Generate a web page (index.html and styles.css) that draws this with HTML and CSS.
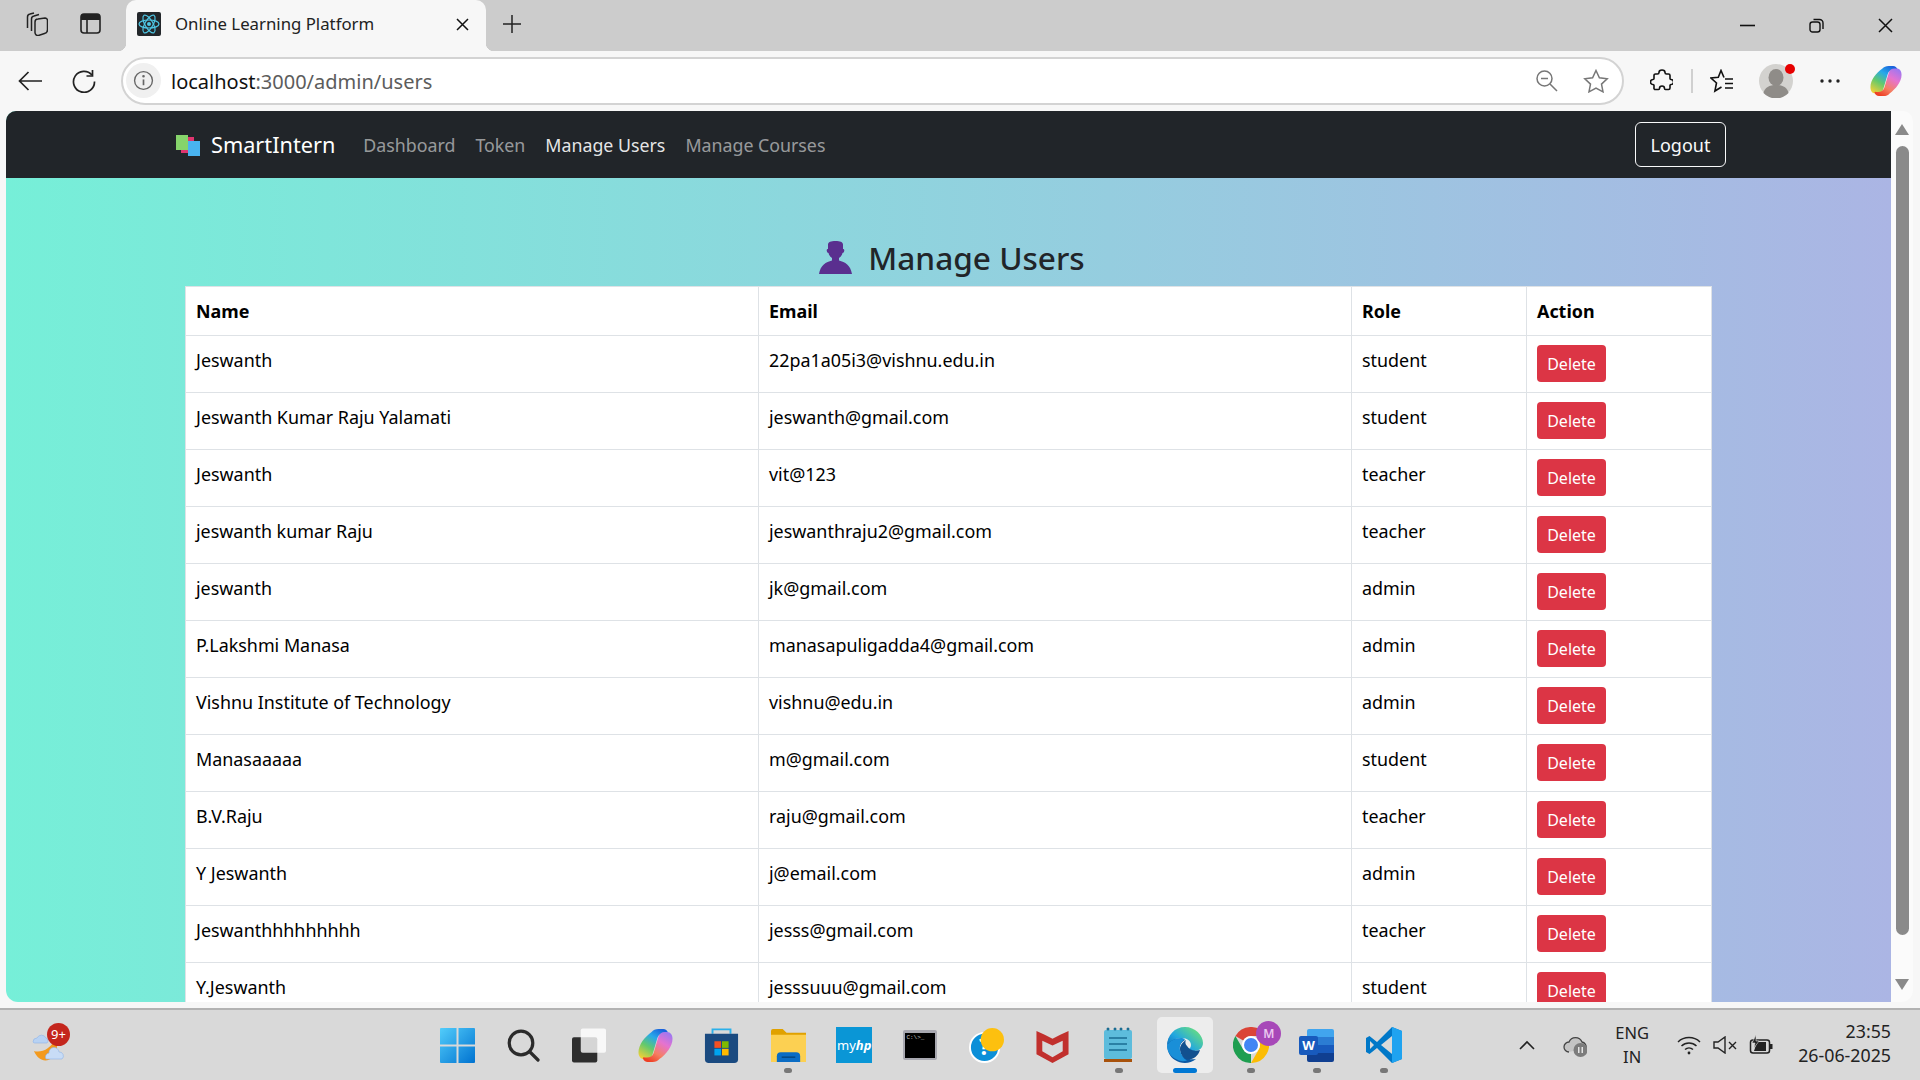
FILE: index.html
```html
<!DOCTYPE html>
<html lang="en">
  <head>
    <meta charset="utf-8">
    <title>Online Learning Platform</title>
    <link rel="stylesheet" href="styles.css">
  </head>
<body>
  <svg class="defs" width="0" height="0">
    <defs>
      <linearGradient id="copA" x1="0.75" y1="0" x2="0.15" y2="1">
        <stop offset="0" stop-color="#1a62dc"/><stop offset="0.3" stop-color="#27a8ea"/><stop offset="0.62" stop-color="#63c96c"/><stop offset="1" stop-color="#f4d136"/>
      </linearGradient>
      <linearGradient id="copB" x1="0.75" y1="0" x2="0.15" y2="1">
        <stop offset="0" stop-color="#ee3f24"/><stop offset="0.3" stop-color="#f57f63"/><stop offset="0.65" stop-color="#e573d0"/><stop offset="1" stop-color="#9a78f2"/>
      </linearGradient>
      <linearGradient id="edgeTop" x1="0" y1="1" x2="1" y2="0.2">
        <stop offset="0" stop-color="#0b62b5"/><stop offset="0.45" stop-color="#22a7e0"/><stop offset="1" stop-color="#6ce27a"/>
      </linearGradient>
      <linearGradient id="winTile" x1="0" y1="0" x2="1" y2="1">
        <stop offset="0" stop-color="#52cdfb"/><stop offset="1" stop-color="#0072d0"/>
      </linearGradient>
      <symbol id="copilot" viewBox="0 0 36 36">
        <path fill="url(#copA)" d="M14 4C15.500 2 18 1 21 1h5c2.500 0 4 1.500 5 4l-.5 1C25 5 21.500 6 20 10L15 27c-1 3.500-3.500 5-6.500 5H6c-3.500 0-5.500-3-5.500-7C.5 17 7 9 14 4z"/>
        <path fill="url(#copB)" transform="rotate(180 18 18)" d="M14 4C15.500 2 18 1 21 1h5c2.500 0 4 1.500 5 4l-.5 1C25 5 21.500 6 20 10L15 27c-1 3.500-3.500 5-6.500 5H6c-3.500 0-5.500-3-5.500-7C.5 17 7 9 14 4z"/>
      </symbol>
    </defs>
  </svg>

  <!-- tab strip -->
  <div class="tabstrip">
    <svg class="ic-collections" viewBox="0 0 24 24" fill="none" stroke="#222" stroke-width="1.500"><path d="M11 10a3 3 0 0 1 3-3l7-1a2.500 2.500 0 0 1 2.500 2.500v9a4 4 0 0 1-3 4l-6 2a3 3 0 0 1-3.500-3z"/><path d="M7.500 19V7a3 3 0 0 1 2.500-3l5-1.500"/><path d="M3.500 16V5a3 3 0 0 1 2.500-3L10 1"/></svg>
    <svg class="ic-vtabs" viewBox="0 0 21 21"><rect x="1" y="1" width="19" height="19" rx="3" fill="none" stroke="#222" stroke-width="1.600"/><path d="M1 4a3 3 0 0 1 3-3h13a3 3 0 0 1 3 3v3H1z" fill="#222"/><path d="M7 7v13" stroke="#222" stroke-width="1.600"/></svg>
    <div class="tab">
      <svg class="favicon" viewBox="0 0 24 24"><rect width="24" height="24" rx="2" fill="#23272b"/><g fill="none" stroke="#4fc8e6" stroke-width="1.200"><ellipse cx="12" cy="12" rx="10" ry="4"/><ellipse cx="12" cy="12" rx="10" ry="4" transform="rotate(60 12 12)"/><ellipse cx="12" cy="12" rx="10" ry="4" transform="rotate(120 12 12)"/></g><circle cx="12" cy="12" r="2" fill="#4fc8e6"/></svg>
      <span class="tab-title">Online Learning Platform</span>
      <svg class="ic-close" viewBox="0 0 13 13"><path d="M1 1l11 11M12 1 1 12" stroke="#111" stroke-width="1.500"/></svg>
    </div>
    <svg class="ic-plus" viewBox="0 0 20 20"><path d="M10 1v18M1 10h18" stroke="#222" stroke-width="1.500"/></svg>
    <div class="winctl">
      <svg class="ic-min" viewBox="0 0 15 15"><path d="M0 7.500h15" stroke="#111" stroke-width="1.600"/></svg>
      <svg class="ic-restore" viewBox="0 0 15 15" fill="none" stroke="#111" stroke-width="1.400"><rect x="1" y="4" width="10" height="10" rx="2.500"/><path d="M4.500 1.500h6a3.500 3.500 0 0 1 3.500 3.500v6"/></svg>
      <svg class="ic-x" viewBox="0 0 15 15"><path d="M1 1l13 13M14 1 1 14" stroke="#111" stroke-width="1.500"/></svg>
    </div>
  </div>

  <!-- toolbar -->
  <div class="toolbar">
    <svg class="ic-back" viewBox="0 0 24 20" fill="none" stroke="#222" stroke-width="1.700"><path d="M24 10H1.500M10.500 1l-9 9 9 9"/></svg>
    <svg class="ic-reload" viewBox="0 0 24 24" fill="none" stroke="#222" stroke-width="1.700"><path d="M20 6a10.500 10.500 0 1 0 2.500 6.500"/><path d="M20.500 1v6h-6"/></svg>
    <div class="addr">
      <span class="addr-chip"><svg viewBox="0 0 20 20" fill="none" stroke="#666" stroke-width="1.300"><circle cx="10" cy="10" r="8.500"/><path d="M10 9v5.500" stroke-width="1.600"/><circle cx="10" cy="6" r="0.600"/></svg></span>
      <span class="addr-url"><span class="addr-host">localhost</span>:3000/admin/users</span>
      <svg class="ic-zoomout" viewBox="0 0 22 22" fill="none" stroke="#777" stroke-width="1.500"><circle cx="8.500" cy="8.500" r="7.500"/><path d="M5 8.500h7M14 14l7 7"/></svg>
      <svg class="ic-star" viewBox="0 0 26 24" fill="none" stroke="#777" stroke-width="1.500"><path d="M13 1.500l3.400 7.200 7.800 1-5.700 5.400 1.500 7.700-7-3.800-7 3.800 1.500-7.700L1.800 9.700l7.800-1z"/></svg>
    </div>
    <svg class="ic-puzzle" viewBox="0 0 23 24" fill="none" stroke="#111" stroke-width="1.600"><path d="M9 3.500a3 2.500 0 0 1 6 0c0 1 .5 1.500 1.500 1.500h2a1.500 1.500 0 0 1 1.500 1.500v3c0 .8.500 1 1 1a2.500 2.500 0 0 1 0 5c-.5 0-1 .3-1 1v2.500a1.500 1.500 0 0 1-1.500 1.500h-3c-.7 0-1-.500-1-1a2.500 2.500 0 0 0-5 0c0 .5-.3 1-1 1H5.500A1.500 1.500 0 0 1 4 18.500v-2c0-.7-.500-1-1-1a2.500 2.500 0 0 1 0-5c.5 0 1-.3 1-1v-3A1.500 1.500 0 0 1 5.500 5h2C8.500 5 9 4.500 9 3.500z"/></svg>
    <span class="tb-sep"></span>
    <svg class="ic-favs" viewBox="0 0 24 24" fill="none" stroke="#111" stroke-width="1.600"><path d="M14 8.500 11 1.500 8.300 8.200 1 9l5.500 5-1.600 8 6.600-4"/><path d="M15 10h8M15 14.500h8M15 19h8"/></svg>
    <span class="avatar"><svg viewBox="0 0 34 34"><circle cx="17" cy="17" r="17" fill="#d3d2cf"/><ellipse cx="17" cy="13.500" rx="7.500" ry="8.500" fill="#8f8c88"/><path d="M4.500 29c1-5.500 6-8 12.500-8s11.500 2.500 12.500 8a17 17 0 0 1-25 0z" fill="#8f8c88"/></svg><span class="avatar-dot"></span></span>
    <svg class="ic-dots" viewBox="0 0 20 4"><circle cx="2" cy="2" r="1.700" fill="#222"/><circle cx="10" cy="2" r="1.700" fill="#222"/><circle cx="18" cy="2" r="1.700" fill="#222"/></svg>
    <svg class="ic-copilot"><use href="#copilot"/></svg>
  </div>

  <!-- page -->
  <div class="viewport">
    <div class="page">
      <nav class="navbar">
        <svg class="brand-icon" viewBox="0 0 25 22"><rect x="6" y="3" width="13" height="16" fill="#e0356f"/><rect x="13" y="7" width="12" height="15" fill="#49b3ef"/><rect x="1" y="1" width="12" height="15" fill="#86d46b"/></svg>
        <span class="brand">SmartIntern</span>
        <a class="nav-link">Dashboard</a>
        <a class="nav-link">Token</a>
        <a class="nav-link active">Manage Users</a>
        <a class="nav-link">Manage Courses</a>
        <button class="btn-logout">Logout</button>
      </nav>

      <div class="content">
        <h2 class="heading">
          <svg class="person" viewBox="0 0 33 33"><path fill="#5a2f8f" d="M9 3.500C9 1 12 0 16.500 0S24 1 24 3.500V8c1.200 0 1.500 1 1.200 2-.2 1-.8 2-1.700 2-.6 2.500-2 4-3.500 5v2.500c6 1.500 11.500 4.500 13 13.500H0c1.500-9 7-12 13-13.500V17c-1.500-1-2.900-2.500-3.500-5-.9 0-1.500-1-1.700-2-.3-1 0-2 1.200-2z"/></svg>
          Manage Users
        </h2>
        <table class="users">
          <colgroup><col class="c1"><col class="c2"><col class="c3"><col class="c4"></colgroup>
          <thead>
            <tr><th>Name</th><th>Email</th><th>Role</th><th>Action</th></tr>
          </thead>
          <tbody>
            <tr><td>Jeswanth</td><td>22pa1a05i3@vishnu.edu.in</td><td>student</td><td><button class="btn-del">Delete</button></td></tr>
            <tr><td>Jeswanth Kumar Raju Yalamati</td><td>jeswanth@gmail.com</td><td>student</td><td><button class="btn-del">Delete</button></td></tr>
            <tr><td>Jeswanth</td><td>vit@123</td><td>teacher</td><td><button class="btn-del">Delete</button></td></tr>
            <tr><td>jeswanth kumar Raju</td><td>jeswanthraju2@gmail.com</td><td>teacher</td><td><button class="btn-del">Delete</button></td></tr>
            <tr><td>jeswanth</td><td>jk@gmail.com</td><td>admin</td><td><button class="btn-del">Delete</button></td></tr>
            <tr><td>P.Lakshmi Manasa</td><td>manasapuligadda4@gmail.com</td><td>admin</td><td><button class="btn-del">Delete</button></td></tr>
            <tr><td>Vishnu Institute of Technology</td><td>vishnu@edu.in</td><td>admin</td><td><button class="btn-del">Delete</button></td></tr>
            <tr><td>Manasaaaaa</td><td>m@gmail.com</td><td>student</td><td><button class="btn-del">Delete</button></td></tr>
            <tr><td>B.V.Raju</td><td>raju@gmail.com</td><td>teacher</td><td><button class="btn-del">Delete</button></td></tr>
            <tr><td>Y Jeswanth</td><td>j@email.com</td><td>admin</td><td><button class="btn-del">Delete</button></td></tr>
            <tr><td>Jeswanthhhhhhhhh</td><td>jesss@gmail.com</td><td>teacher</td><td><button class="btn-del">Delete</button></td></tr>
            <tr><td>Y.Jeswanth</td><td>jesssuuu@gmail.com</td><td>student</td><td><button class="btn-del">Delete</button></td></tr>
          </tbody>
        </table>
      </div>
    </div>
    <div class="scrollbar">
      <span class="arrow-up"></span>
      <span class="thumb"></span>
      <span class="arrow-down"></span>
    </div>
  </div>

  <!-- taskbar -->
  <div class="taskbar">
    <div class="weather">
      <svg viewBox="0 0 36 36" class="weather-icon">
        <path fill="#f39a1e" d="M3 22c3 1 9 1 14-3 4-3 6-6 7-9 3 4 3 12-2 18-6 6-15 4-19-6z"/>
        <path fill="#b8d2f3" stroke="#8db4e8" stroke-width="0.600" d="M2 13a4 4 0 0 1 4-4 5 5 0 0 1 9 0 3 3 0 0 1 1 5H4a2 2 0 0 1-2-1z"/>
        <path fill="#c8dcf6" stroke="#8db4e8" stroke-width="0.600" d="M15 30a4 4 0 0 1 3-6 5 5 0 0 1 10-1 4 4 0 0 1 3 7z"/>
      </svg>
      <span class="badge-wx">9+</span>
    </div>
    <div class="apps">
      <span class="app"><svg class="i35" viewBox="0 0 35 35"><path fill="url(#winTile)" d="M1 0h15.500v16.500H0V1a1 1 0 0 1 1-1zM18.500 0H34a1 1 0 0 1 1 1v15.500H18.500zM0 18.500h16.500V35H1a1 1 0 0 1-1-1zM18.500 18.500H35V34a1 1 0 0 1-1 1H18.500z"/></svg></span>
      <span class="app"><svg class="i33" viewBox="0 0 33 33" fill="none" stroke="#2b2b2b" stroke-width="3.200"><circle cx="14" cy="14" r="11.800"/><path d="M22.500 22.500l8.500 8.500" stroke-linecap="round"/></svg></span>
      <span class="app"><svg class="i35" viewBox="0 0 36 35"><rect x="0" y="9" width="26" height="26" rx="2" fill="#2e2e2e"/><rect x="9" y="0" width="26" height="25" rx="2" fill="#fff" fill-opacity="0.800"/></svg></span>
      <span class="app"><svg class="i35"><use href="#copilot"/></svg></span>
      <span class="app"><svg class="i35" viewBox="0 0 35 37"><path d="M8 6V1.500h19V6" fill="none" stroke="#2bb0ea" stroke-width="2"/><path fill="#1a4a80" d="M0 6h35v27a4 4 0 0 1-4 4H4a4 4 0 0 1-4-4z"/><rect x="10" y="14" width="7" height="7" fill="#f25022"/><rect x="18" y="14" width="7" height="7" fill="#7fba00"/><rect x="10" y="22" width="7" height="7" fill="#00a4ef"/><rect x="18" y="22" width="7" height="7" fill="#ffb900"/></svg></span>
      <span class="app on"><svg class="i35" viewBox="0 0 36 34"><path fill="#e0a100" d="M0 2a2 2 0 0 1 2-2h10l4 4h20v6H0z"/><path fill="#fcd052" d="M0 6h36v28H0z"/><path fill="#0a6cc4" d="M6 34v-6a4 4 0 0 1 4-4h16a4 4 0 0 1 4 4v6z"/><path d="M11 29h14" stroke="#04467f" stroke-width="1.500"/></svg></span>
      <span class="app"><span class="myhp">my<i>hp</i></span></span>
      <span class="app"><span class="cmd"><span class="cmd-body">C:\&gt;_</span></span></span>
      <span class="app"><svg class="i35 help" viewBox="0 0 36 36"><circle cx="16" cy="20" r="15" fill="#0b8fd8" stroke="#fff" stroke-width="2"/><text x="16" y="28" text-anchor="middle" class="help-q">?</text><circle cx="24" cy="12" r="12" fill="#fdc00f"/></svg></span>
      <span class="app"><svg class="i33" viewBox="0 0 33 36"><path fill="#c1302d" d="M0 3l8.500 4L16.500 11 24.500 7 33 3v24L16.500 36 0 27zM6 13v11l10.500 6L27 24V13l-10.500 5z"/></svg></span>
      <span class="app on"><svg class="i29" viewBox="0 0 29 36"><rect y="3" width="28" height="29" rx="2" fill="#5dbcdc"/><path d="M0 32h28v3H0z" fill="#a8520c"/><g fill="#1a6c92"><circle cx="4" cy="2" r="1.500"/><circle cx="11" cy="2" r="1.500"/><circle cx="17" cy="2" r="1.500"/><circle cx="24" cy="2" r="1.500"/></g><path d="M5 11h18M5 17h18M5 23h18" stroke="#1a6c92" stroke-width="1.500"/></svg></span>
      <span class="app active"><svg class="i36" viewBox="0 0 36 36">
        <path fill="#0c59a4" d="M2 11C-1 18 0 28 8 33c6 4 15 4 21-1-7 1-14-1-16-7-2-5 1-10 5-12-6-2-13-1-16-2z"/>
        <path fill="url(#edgeTop)" d="M0 19C0 8 8 0 18 0c10 0 18 8 18 16 0 5-4 8-9 8-3 0-5-1-5-2 1-1 2-2 2-4 0-4-4-7-9-7C8 11 2 14 0 19z"/>
        <path fill="#12508f" d="M13 22c0-4 3-7 6-9-1 2-1 4 1 6 2 3 6 6 13 4-2 7-9 11-14 9-4-2-6-6-6-10z"/>
        <path fill="#1a8fd8" d="M0 19c2-5 8-8 14-8 2 0 3 .5 4 1.500-4 2-6 6-5 11 1 4 3 8 7 10-3 1-7 1-10-1C4 30 0 25 0 19z"/>
      </svg></span>
      <span class="app on"><svg class="i36" viewBox="0 0 36 36"><path fill="#db4437" d="M2.400 9A18 18 0 0 1 33.600 9H18A9 9 0 0 0 10.200 13.500z"/><path fill="#fbbc04" transform="rotate(120 18 18)" d="M2.400 9A18 18 0 0 1 33.600 9H18A9 9 0 0 0 10.200 13.500z"/><path fill="#1e9e50" transform="rotate(240 18 18)" d="M2.400 9A18 18 0 0 1 33.600 9H18A9 9 0 0 0 10.200 13.500z"/><circle cx="18" cy="18" r="9" fill="#fff"/><circle cx="18" cy="18" r="7" fill="#4285f4"/></svg><span class="chrome-badge">M</span></span>
      <span class="app on"><span class="word"><span class="word-bands"><i></i><i></i><i></i><i></i></span><span class="word-w">W</span></span></span>
      <span class="app on"><svg class="i36" viewBox="0 0 36 36"><path fill="#0078c8" d="M26 0 11 15 3.500 9 0 11v14l3.500 2L11 21l15 15 10-4V4z"/><path fill="#1fa3f0" d="M26 0l10 4v28l-10 4z"/><path fill="#d9dada" d="M26 9 15 18l11 9z"/><path fill="#d9dada" d="M4 14v8l4-4z"/></svg></span>
    </div>
    <div class="tray">
      <svg class="t-chev" viewBox="0 0 16 10" fill="none" stroke="#222" stroke-width="1.600"><path d="M1 9l7-7 7 7"/></svg>
      <span class="t-cloud"><svg viewBox="0 0 24 24"><path d="M6 19a5 5 0 0 1 0-10 7 7 0 0 1 13 0 5 5 0 0 1 4 6" fill="#c4c4c4" stroke="#444" stroke-width="1.300"/><circle cx="17.500" cy="17" r="7" fill="#7c7c7c"/><path d="M15.800 14v6M19.200 14v6" stroke="#fff" stroke-width="1.200"/></svg></span>
      <div class="t-lang"><span>ENG</span><span>IN</span></div>
      <svg class="t-wifi" viewBox="0 0 24 20" fill="none" stroke="#222" stroke-width="1.500"><path d="M1 7a16 16 0 0 1 22 0M4.500 11a11 11 0 0 1 15 0M8 14.500a6 6 0 0 1 8 0"/><circle cx="12" cy="18" r="1.400" fill="#222" stroke="none"/></svg>
      <svg class="t-vol" viewBox="0 0 24 18" fill="none" stroke="#222" stroke-width="1.400"><path d="M1 6v6h4l7 5V1L5 6z"/><path d="M16 6l7 7M23 6l-7 7"/></svg>
      <svg class="t-batt" viewBox="0 0 24 20"><rect x="1.500" y="5" width="19" height="13" rx="2.500" fill="none" stroke="#222" stroke-width="1.500"/><rect x="21" y="9" width="2.500" height="5" fill="#222"/><path d="M5 16l3-9h9v9z" fill="#222"/><path d="M7 0 3 8h3l-1 5 5-7H7z" fill="#222" stroke="#d9d9d9" stroke-width="0.600"/></svg>
      <div class="t-clock"><span>23:55</span><span>26-06-2025</span></div>
    </div>
  </div>
</body>
</html>
```

FILE: styles.css
```css
* {
  box-sizing: border-box;
}
html, body {
  margin: 0;
  height: 100%;
}
body {
  width: 1920px;
  height: 1080px;
  overflow: hidden;
  display: flex;
  flex-direction: column;
  font-family: "Noto Sans", "Open Sans", sans-serif;
  background: #f7f7f7;
}
svg {
  display: block;
  flex: none;
}
.defs {
  position: absolute;
}

/* tab strip */
.tabstrip {
  height: 51px;
  flex: none;
  background: #cccccc;
  display: flex;
  align-items: center;
  padding-left: 24px;
}
.ic-collections { width: 24px; height: 24px; margin-top: -4px; }
.ic-vtabs { width: 21px; height: 21px; margin-left: 32px; margin-top: -4px; }
.tab {
  position: relative;
  align-self: stretch;
  width: 360px;
  margin-left: 25px;
  padding: 0 17px 4px 11px;
  background: #f7f7f7;
  border-radius: 10px 10px 0 0;
  display: flex;
  align-items: center;
}
.tab::before, .tab::after {
  content: "";
  position: absolute;
  bottom: 0;
  width: 8px;
  height: 8px;
}
.tab::before {
  left: -8px;
  background: radial-gradient(circle at 0 0, #cccccc 8px, #f7f7f7 8.5px);
}
.tab::after {
  right: -8px;
  background: radial-gradient(circle at 100% 0, #cccccc 8px, #f7f7f7 8.5px);
}
.favicon { width: 24px; height: 24px; }
.tab-title {
  flex: 1;
  margin-left: 14px;
  font-size: 16.8px;
  color: #222;
  white-space: nowrap;
}
.ic-close { width: 13px; height: 13px; margin-top: 2px; }
.ic-plus { width: 20px; height: 20px; margin-left: 16px; margin-top: -4px; }
.winctl {
  margin-left: auto;
  margin-right: 27px;
  display: flex;
  align-items: center;
  gap: 54px;
}
.winctl svg { width: 15px; height: 15px; }

/* toolbar */
.toolbar {
  height: 60px;
  flex: none;
  background: #f7f7f7;
  display: flex;
  align-items: center;
  padding-left: 18px;
}
.ic-back { width: 24px; height: 20px; }
.ic-reload { width: 24px; height: 24px; margin-left: 30px; }
.addr {
  width: 1503px;
  height: 48px;
  margin-left: 25px;
  margin-top: -1px;
  background: #fff;
  border: 2px solid #d3d3d3;
  border-radius: 24px;
  display: flex;
  align-items: center;
  padding-left: 3px;
}
.addr-chip {
  width: 35px;
  height: 35px;
  border-radius: 50%;
  background: #f0f0f0;
  display: flex;
  align-items: center;
  justify-content: center;
}
.addr-chip svg { width: 21px; height: 21px; }
.addr-url {
  margin-left: 10px;
  margin-top: 2px;
  font-size: 20px;
  color: #5c5c5c;
  white-space: nowrap;
}
.addr-host { color: #111; }
.ic-zoomout { width: 22px; height: 22px; margin-left: auto; }
.ic-star { width: 26px; height: 24px; margin-left: 25px; margin-right: 13px; }
.ic-puzzle { width: 23px; height: 24px; margin-left: 26px; }
.tb-sep {
  width: 2px;
  height: 24px;
  margin-left: 18px;
  background: #d0d0d0;
}
.ic-favs { width: 24px; height: 24px; margin-left: 17px; }
.avatar {
  position: relative;
  width: 34px;
  height: 34px;
  margin-left: 25px;
}
.avatar svg { width: 34px; height: 34px; }
.avatar-dot {
  position: absolute;
  top: 0;
  right: -2px;
  width: 10px;
  height: 10px;
  border-radius: 50%;
  background: #e60000;
}
.ic-dots { width: 20px; height: 4px; margin-left: 27px; }
.ic-copilot { width: 32px; height: 32px; margin-left: 30px; }

/* page */
.viewport {
  height: 891px;
  flex: none;
  margin: 0 7px 6px 6px;
  display: flex;
  border-radius: 10px 10px 12px 12px;
  overflow: hidden;
}
.page {
  width: 1885px;
  background: linear-gradient(90deg, #76efd8 0%, #abb5e4 100%);
  overflow: hidden;
}
.navbar {
  height: 67px;
  background: #212529;
  display: flex;
  align-items: center;
  padding-left: 169px;
}
.brand-icon { width: 25px; height: 22px; margin-top: 1px; }
.brand {
  margin-left: 11px;
  margin-right: 28px;
  font-size: 21.700px;
  color: #fff;
}
.nav-link {
  margin-right: 20px;
  font-size: 17.800px;
  color: rgba(255, 255, 255, 0.55);
}
.nav-link.active { color: rgba(255, 255, 255, 0.9); }
.btn-logout {
  margin-left: auto;
  margin-right: 165px;
  width: 91px;
  height: 45px;
  background: transparent;
  border: 1px solid #f8f9fa;
  border-radius: 6px;
  color: #f8f9fa;
  font: 18px "Noto Sans", sans-serif;
}
.content {
  padding-left: 179px;
}
.heading {
  width: 1526px;
  height: 108px;
  margin: 0;
  padding: 50px 0 0 8px;
  display: flex;
  justify-content: center;
  align-items: center;
  gap: 16px;
  font-size: 31.600px;
  font-weight: 500;
  color: #212529;
}
.person { width: 33px; height: 33px; }
.users {
  width: 1527px;
  table-layout: fixed;
  border-collapse: collapse;
  background: #fff;
  color: #000;
  font-size: 17.900px;
}
.c1 { width: 573px; }
.c2 { width: 593px; }
.c3 { width: 175px; }
.users th, .users td {
  border: 1px solid #dee2e6;
  text-align: left;
  vertical-align: top;
}
.users th {
  height: 49px;
  padding: 10px 10px 9px;
  line-height: 29px;
  font-weight: 700;
}
.users td {
  height: 56px;
  padding: 9px 10px 10px;
  line-height: 31px;
}
.btn-del {
  display: block;
  width: 69px;
  height: 37px;
  padding: 0;
  background: #dc3545;
  border: 0;
  border-radius: 4px;
  color: #fff;
  font: 16px "Noto Sans", sans-serif;
}
.scrollbar {
  width: 22px;
  background: #fbfbfb;
  display: flex;
  flex-direction: column;
  align-items: center;
  padding-top: 13px;
}
.arrow-up, .arrow-down {
  width: 0;
  height: 0;
  border-left: 7.500px solid transparent;
  border-right: 7.500px solid transparent;
}
.arrow-up { border-bottom: 11px solid #8a8a8a; }
.arrow-down { border-top: 11px solid #8a8a8a; margin-top: 44px; }
.thumb {
  width: 13px;
  height: 789px;
  margin-top: 11px;
  border-radius: 7px;
  background: #8a8a8a;
}

/* taskbar */
.taskbar {
  flex: 1;
  border-top: 2px solid #b2b2b2;
  background: #d9d9d9;
  display: flex;
  align-items: center;
  position: relative;
}
.weather {
  position: relative;
  width: 40px;
  height: 40px;
  margin-left: 31px;
}
.weather-icon { width: 36px; height: 36px; margin-top: 4px; }
.badge-wx {
  position: absolute;
  top: -2px;
  left: 16px;
  width: 23px;
  height: 23px;
  border-radius: 50%;
  background: #c4261d;
  color: #fff;
  font-size: 13px;
  line-height: 23px;
  text-align: center;
}
.apps {
  display: flex;
  margin-left: 353px;
}
.app {
  position: relative;
  width: 66.200px;
  height: 56px;
  display: flex;
  align-items: center;
  justify-content: center;
}
.app.on::after, .app.active::after {
  content: "";
  position: absolute;
  bottom: 0;
  left: 29px;
  width: 8px;
  height: 5px;
  border-radius: 3px;
  background: #777;
}
.app.active {
  width: 56px;
  margin: 0 5.100px;
  background: #ededed;
  border-radius: 5px;
}
.app.active::after {
  left: 16px;
  width: 24px;
  background: #0078d4;
}
.i35 { width: 35px; height: 35px; }
.i33 { width: 33px; height: 35px; }
.i29 { width: 29px; height: 36px; }
.i36 { width: 36px; height: 36px; }
.help { overflow: visible; }
.help-q { font: 700 24px "Noto Sans", sans-serif; fill: #fff; }
.myhp {
  width: 36px;
  height: 36px;
  background: #0a96d6;
  color: #fff;
  font-size: 13px;
  line-height: 36px;
  text-align: center;
}
.myhp i { font-weight: 700; }
.cmd {
  width: 34px;
  height: 30px;
  padding: 3px 2px 2px;
  background: #a8a8b0;
  border-radius: 2px;
}
.cmd-body {
  display: block;
  height: 100%;
  background: #000;
  color: #ccc;
  font: 6px "Liberation Mono", monospace;
  padding: 1px;
}
.chrome-badge {
  position: absolute;
  top: 4px;
  left: 38px;
  width: 25px;
  height: 25px;
  border-radius: 50%;
  background: #a748b8;
  color: #eac8ef;
  font-size: 12px;
  font-weight: 600;
  line-height: 25px;
  text-align: center;
}
.word {
  position: relative;
  width: 35px;
  height: 33px;
  margin-left: -2px;
}
.word-bands {
  position: absolute;
  top: 0;
  left: 8px;
  width: 27px;
  height: 33px;
  display: flex;
  flex-direction: column;
  border-radius: 2px;
  overflow: hidden;
}
.word-bands i { flex: 1; }
.word-bands i:nth-child(1) { background: #41a5ee; }
.word-bands i:nth-child(2) { background: #2b7cd3; }
.word-bands i:nth-child(3) { background: #185abd; }
.word-bands i:nth-child(4) { background: #103f91; }
.word-w {
  position: absolute;
  top: 7px;
  left: 0;
  width: 19px;
  height: 19px;
  background: #185abd;
  border-radius: 2px;
  color: #fff;
  font-size: 13px;
  font-weight: 700;
  line-height: 19px;
  text-align: center;
}

/* tray */
.tray {
  position: absolute;
  top: 0;
  right: 29px;
  height: 100%;
  display: flex;
  align-items: center;
}
.t-chev { width: 16px; height: 10px; margin-right: 28px; }
.t-cloud svg { width: 24px; height: 24px; }
.t-lang {
  width: 34px;
  margin-left: 28px;
  margin-right: 28px;
  display: flex;
  flex-direction: column;
  align-items: center;
  font-size: 16.500px;
  line-height: 24px;
  color: #222;
}
.t-wifi { width: 24px; height: 20px; }
.t-vol { width: 24px; height: 18px; margin-left: 12px; }
.t-batt { width: 24px; height: 20px; margin-left: 12px; }
.t-clock {
  margin-left: 25px;
  margin-top: -4px;
  display: flex;
  flex-direction: column;
  align-items: flex-end;
  font-size: 17.800px;
  line-height: 24px;
  color: #222;
}
```
